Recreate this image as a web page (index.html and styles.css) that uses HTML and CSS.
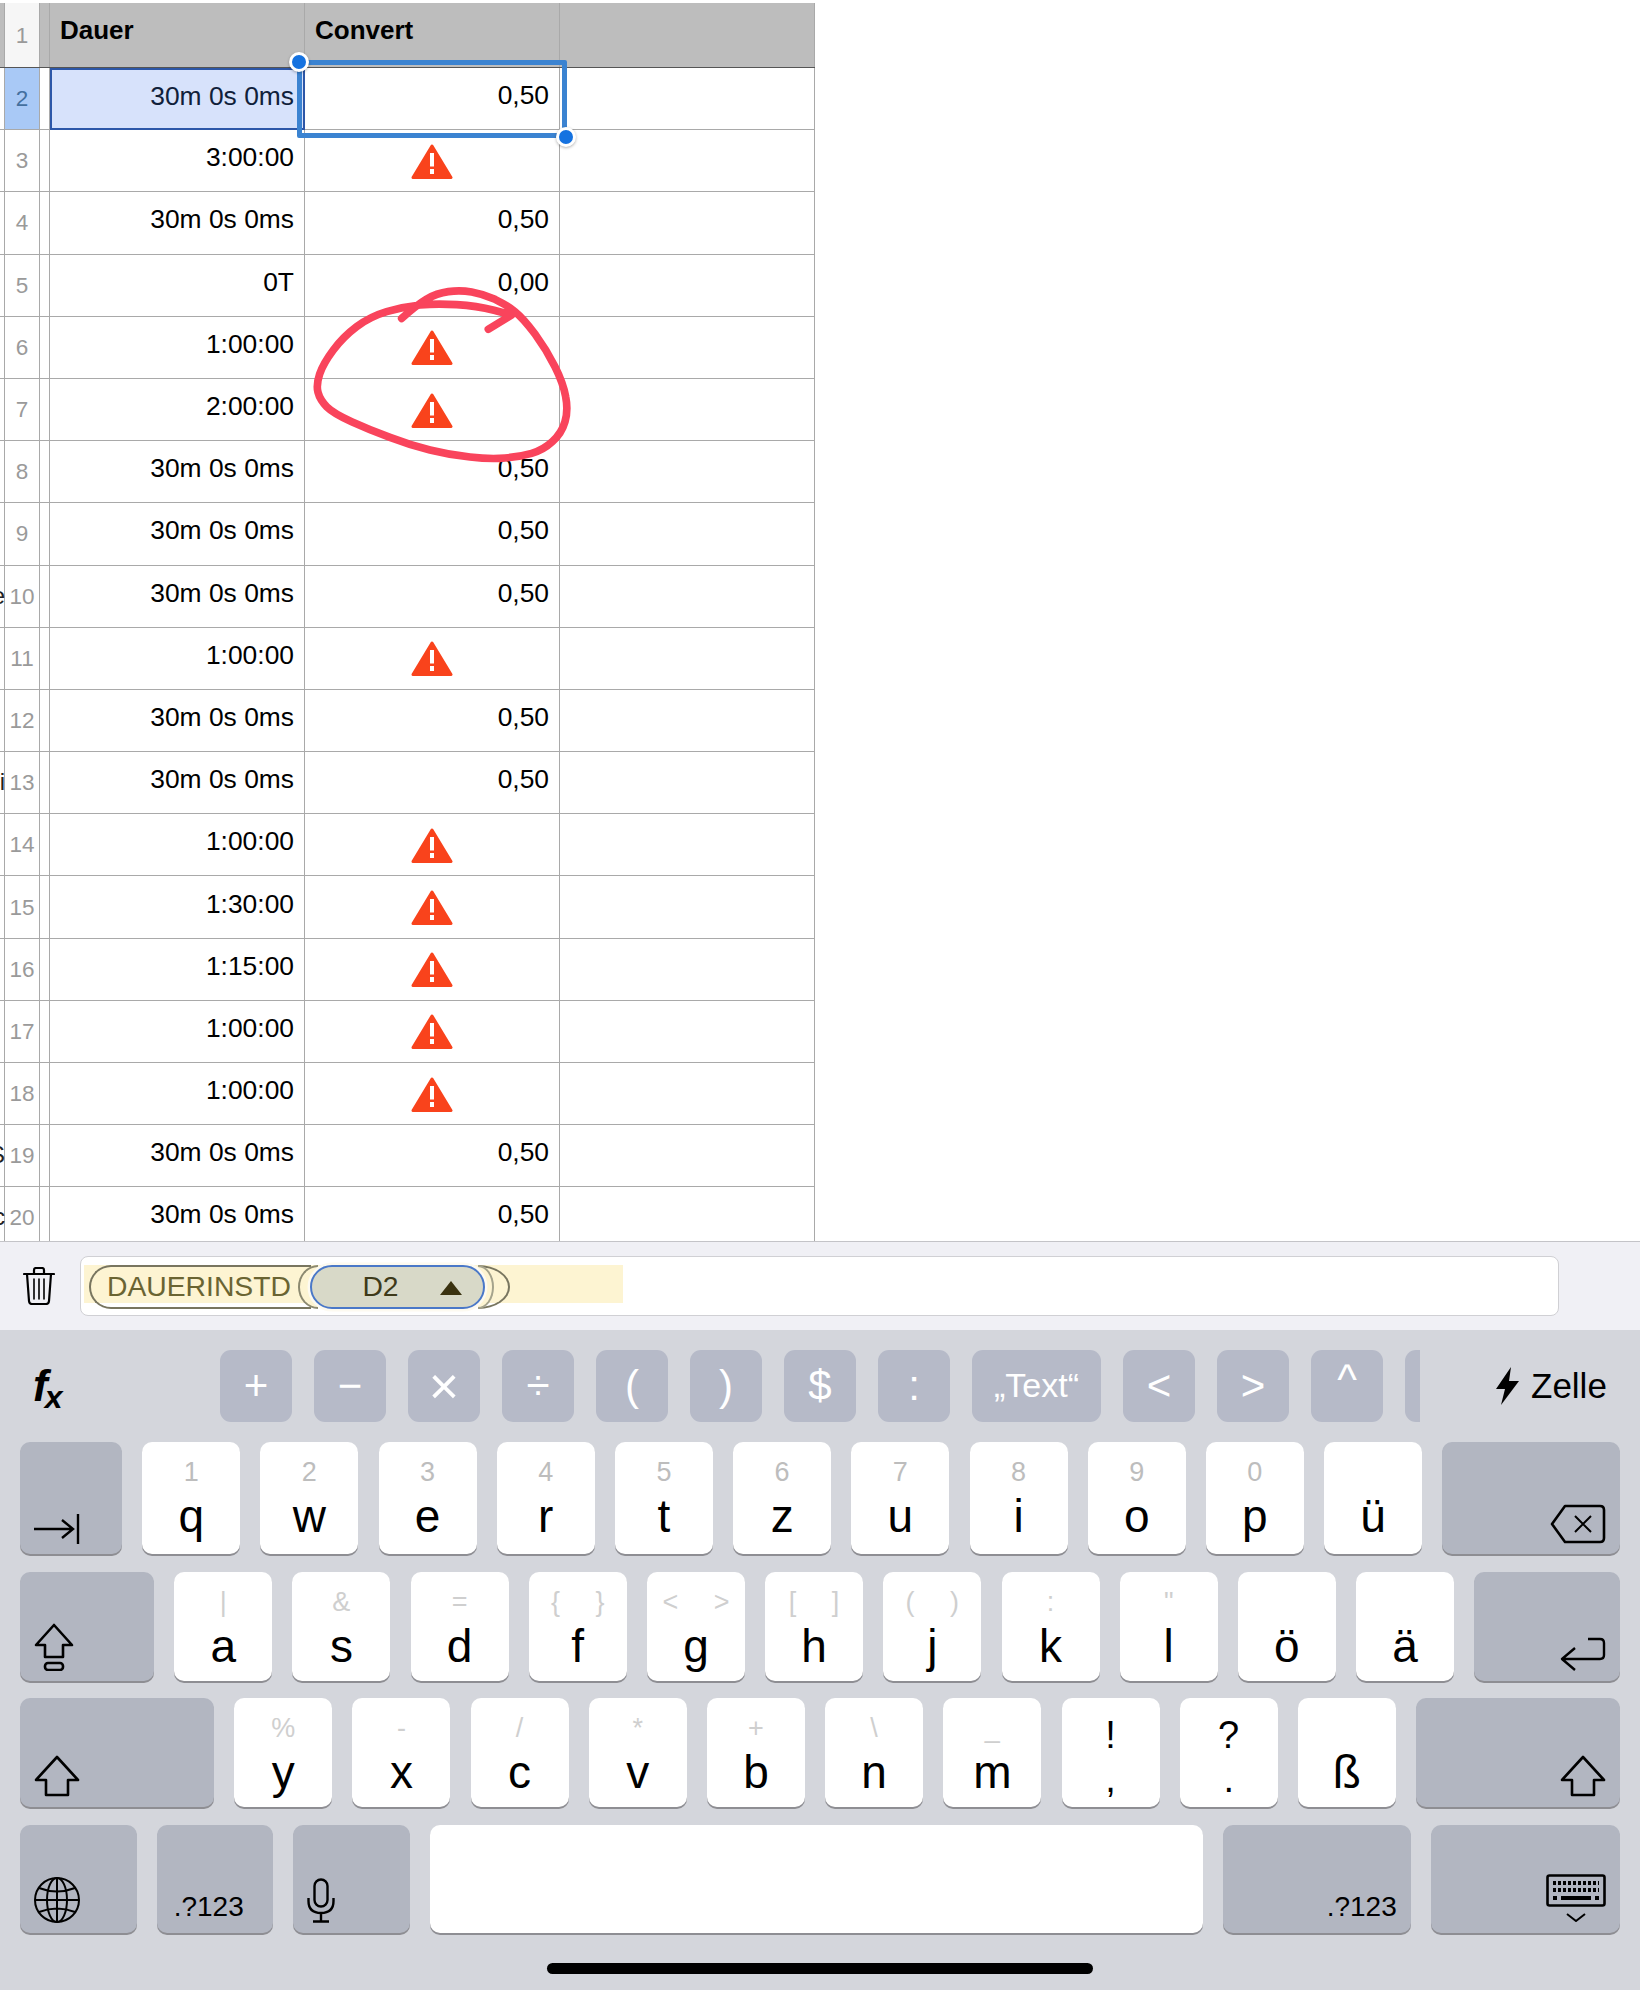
FILE: index.html
```html
<!DOCTYPE html>
<html lang="de">
<head>
    <meta charset="UTF-8" />
    <meta name="viewport" content="width=device-width, initial-scale=1.0" />
    <title>Tabelle</title>
    <link rel="stylesheet" href="styles.css">
</head>
<body>
    <svg class="defs" width="0" height="0" aria-hidden="true">
        <symbol id="warn" viewBox="0 0 42 36">
            <path d="M21 2 L40 33.5 H2 Z" fill="#f9431c" stroke="#f9431c" stroke-width="3" stroke-linejoin="round"/>
            <rect x="19" y="9" width="4" height="13.5" fill="#fff"/>
            <rect x="19" y="25" width="4" height="5" fill="#fff"/>
        </symbol>
    </svg>

    <main class="sheet">
        <div class="row head">
            <div class="idx">1</div><div class="gutter"></div>
            <div class="cell title">Dauer</div><div class="cell title">Convert</div><div class="cell"></div>
        </div>
        <div class="row">
            <div class="idx active">2</div><div class="gutter"></div>
            <div class="cell num picked">30m 0s 0ms</div><div class="cell num">0,50</div><div class="cell"></div>
        </div>
        <div class="row">
            <div class="idx">3</div><div class="gutter"></div>
            <div class="cell num">3:00:00</div><div class="cell warn"><svg><use href="#warn"/></svg></div><div class="cell"></div>
        </div>
        <div class="row">
            <div class="idx">4</div><div class="gutter"></div>
            <div class="cell num">30m 0s 0ms</div><div class="cell num">0,50</div><div class="cell"></div>
        </div>
        <div class="row">
            <div class="idx">5</div><div class="gutter"></div>
            <div class="cell num">0T</div><div class="cell num">0,00</div><div class="cell"></div>
        </div>
        <div class="row">
            <div class="idx">6</div><div class="gutter"></div>
            <div class="cell num">1:00:00</div><div class="cell warn"><svg><use href="#warn"/></svg></div><div class="cell"></div>
        </div>
        <div class="row">
            <div class="idx">7</div><div class="gutter"></div>
            <div class="cell num">2:00:00</div><div class="cell warn"><svg><use href="#warn"/></svg></div><div class="cell"></div>
        </div>
        <div class="row">
            <div class="idx">8</div><div class="gutter"></div>
            <div class="cell num">30m 0s 0ms</div><div class="cell num">0,50</div><div class="cell"></div>
        </div>
        <div class="row">
            <div class="idx">9</div><div class="gutter"></div>
            <div class="cell num">30m 0s 0ms</div><div class="cell num">0,50</div><div class="cell"></div>
        </div>
        <div class="row">
            <div class="idx"><span class="ghost">e</span>10</div><div class="gutter"></div>
            <div class="cell num">30m 0s 0ms</div><div class="cell num">0,50</div><div class="cell"></div>
        </div>
        <div class="row">
            <div class="idx">11</div><div class="gutter"></div>
            <div class="cell num">1:00:00</div><div class="cell warn"><svg><use href="#warn"/></svg></div><div class="cell"></div>
        </div>
        <div class="row">
            <div class="idx">12</div><div class="gutter"></div>
            <div class="cell num">30m 0s 0ms</div><div class="cell num">0,50</div><div class="cell"></div>
        </div>
        <div class="row">
            <div class="idx"><span class="ghost">i</span>13</div><div class="gutter"></div>
            <div class="cell num">30m 0s 0ms</div><div class="cell num">0,50</div><div class="cell"></div>
        </div>
        <div class="row">
            <div class="idx">14</div><div class="gutter"></div>
            <div class="cell num">1:00:00</div><div class="cell warn"><svg><use href="#warn"/></svg></div><div class="cell"></div>
        </div>
        <div class="row">
            <div class="idx">15</div><div class="gutter"></div>
            <div class="cell num">1:30:00</div><div class="cell warn"><svg><use href="#warn"/></svg></div><div class="cell"></div>
        </div>
        <div class="row">
            <div class="idx">16</div><div class="gutter"></div>
            <div class="cell num">1:15:00</div><div class="cell warn"><svg><use href="#warn"/></svg></div><div class="cell"></div>
        </div>
        <div class="row">
            <div class="idx">17</div><div class="gutter"></div>
            <div class="cell num">1:00:00</div><div class="cell warn"><svg><use href="#warn"/></svg></div><div class="cell"></div>
        </div>
        <div class="row">
            <div class="idx">18</div><div class="gutter"></div>
            <div class="cell num">1:00:00</div><div class="cell warn"><svg><use href="#warn"/></svg></div><div class="cell"></div>
        </div>
        <div class="row">
            <div class="idx"><span class="ghost">S</span>19</div><div class="gutter"></div>
            <div class="cell num">30m 0s 0ms</div><div class="cell num">0,50</div><div class="cell"></div>
        </div>
        <div class="row">
            <div class="idx"><span class="ghost">c</span>20</div><div class="gutter"></div>
            <div class="cell num">30m 0s 0ms</div><div class="cell num">0,50</div><div class="cell"></div>
        </div>

        <div class="selection"><i class="handle tl"></i><i class="handle br"></i></div>

        <svg class="scribble" viewBox="0 0 900 630" fill="none" stroke="#f9445c" stroke-width="23" stroke-linecap="round" stroke-linejoin="round">
            <path d="M335 145 Q380 105 410 87 Q440 70 475 65 Q510 60 545 66 Q580 72 615 88 Q650 105 675 125 Q700 145 735 192 Q770 240 795 290 Q820 340 827 380 Q835 420 825 455 Q815 490 787 515 Q760 540 725 550 Q690 560 645 564 Q600 568 540 561 Q480 555 420 540 Q360 525 300 502 Q240 480 185 455 Q130 430 110 410 Q90 390 84 367 Q78 345 89 312 Q100 280 130 240 Q160 200 200 170 Q240 140 290 125 Q340 110 390 105 Q440 100 500 104 Q560 108 612 121 L665 135 L595 178"/>
        </svg>
    </main>

    <section class="formula-bar">
        <svg class="trash" viewBox="0 0 32 38" fill="none" stroke="#000" stroke-width="2.2" stroke-linejoin="round" stroke-linecap="round">
            <path d="M1 7 H31 M11 7 V3 Q11 1 13 1 H19 Q21 1 21 3 V7"/>
            <path d="M4 7 L6 34 Q6.3 37 9 37 H23 Q25.7 37 26 34 L28 7"/>
            <path d="M11 12 V32 M16 12 V32 M21 12 V32" stroke-width="1.6"/>
        </svg>
        <div class="field">
            <div class="formula">
                <span class="fn">DAUERINSTD</span>
                <span class="open"></span>
                <span class="ref">D2<i class="caret"></i></span>
                <span class="close outer"></span>
                <span class="close inner"></span>
            </div>
        </div>
    </section>

    <section class="keyboard">
        <div class="tools">
            <span class="fx">f<sub>x</sub></span>
            <div class="ops">
                <span class="op">+</span>
                <span class="op">−</span>
                <span class="op times">×</span>
                <span class="op">÷</span>
                <span class="op">(</span>
                <span class="op">)</span>
                <span class="op">$</span>
                <span class="op">:</span>
                <span class="op text">„Text“</span>
                <span class="op">&lt;</span>
                <span class="op">&gt;</span>
                <span class="op up">^</span>
                <span class="op"></span>
            </div>
            <span class="mode">
                <svg class="bolt" viewBox="0 0 24 38"><path d="M16 0 L1 22 H10 L6 38 L24 14 H14 Z" fill="#000"/></svg>
                Zelle
            </span>
        </div>

        <div class="keys tall">
            <div class="key fn-key tab">
                <svg width="46" height="30" viewBox="0 0 46 30" fill="none" stroke="#000" stroke-width="2.4"><path d="M0 15 H38 M28 6 L39 15 L28 24"/><path d="M44 0 V30"/></svg>
            </div>
            <div class="key"><span class="hint">1</span><span class="ltr">q</span></div>
            <div class="key"><span class="hint">2</span><span class="ltr">w</span></div>
            <div class="key"><span class="hint">3</span><span class="ltr">e</span></div>
            <div class="key"><span class="hint">4</span><span class="ltr">r</span></div>
            <div class="key"><span class="hint">5</span><span class="ltr">t</span></div>
            <div class="key"><span class="hint">6</span><span class="ltr">z</span></div>
            <div class="key"><span class="hint">7</span><span class="ltr">u</span></div>
            <div class="key"><span class="hint">8</span><span class="ltr">i</span></div>
            <div class="key"><span class="hint">9</span><span class="ltr">o</span></div>
            <div class="key"><span class="hint">0</span><span class="ltr">p</span></div>
            <div class="key"><span class="hint">&nbsp;</span><span class="ltr">ü</span></div>
            <div class="key fn-key grow end">
                <svg width="56" height="40" viewBox="0 0 56 40" fill="none" stroke="#000" stroke-width="2.6" stroke-linejoin="round"><path d="M15 2 H50 Q54 2 54 6 V34 Q54 38 50 38 H15 L2 20 Z"/><path d="M25 12 L41 28 M41 12 L25 28" stroke-width="2"/></svg>
            </div>
        </div>

        <div class="keys">
            <div class="key fn-key caps">
                <svg width="40" height="48" viewBox="0 0 40 48" fill="none" stroke="#000" stroke-width="2.6" stroke-linejoin="round"><path d="M20 2 L38 22 H29 V34 H11 V22 H2 Z"/><rect x="11" y="40" width="18" height="7" rx="3"/></svg>
            </div>
            <div class="key"><span class="hint thin">|</span><span class="ltr">a</span></div>
            <div class="key"><span class="hint thin">&amp;</span><span class="ltr">s</span></div>
            <div class="key"><span class="hint thin">=</span><span class="ltr">d</span></div>
            <div class="key"><span class="hint thin wide">{ }</span><span class="ltr">f</span></div>
            <div class="key"><span class="hint thin wide">&lt; &gt;</span><span class="ltr">g</span></div>
            <div class="key"><span class="hint thin wide">[ ]</span><span class="ltr">h</span></div>
            <div class="key"><span class="hint thin wide">( )</span><span class="ltr">j</span></div>
            <div class="key"><span class="hint thin">:</span><span class="ltr">k</span></div>
            <div class="key"><span class="hint thin">"</span><span class="ltr">l</span></div>
            <div class="key"><span class="hint">&nbsp;</span><span class="ltr">ö</span></div>
            <div class="key"><span class="hint">&nbsp;</span><span class="ltr">ä</span></div>
            <div class="key fn-key grow end">
                <svg width="46" height="34" viewBox="0 0 46 34" fill="none" stroke="#000" stroke-width="2.4" stroke-linejoin="round"><path d="M28 2 H40 Q44 2 44 6 V18 Q44 22 40 22 H3 M15 11 L2 22 L15 33"/></svg>
            </div>
        </div>

        <div class="keys">
            <div class="key fn-key shift">
                <svg width="46" height="42" viewBox="0 0 46 42" fill="none" stroke="#000" stroke-width="2.6" stroke-linejoin="round"><path d="M23 2 L44 25 H34 V40 H12 V25 H2 Z"/></svg>
            </div>
            <div class="key"><span class="hint thin">%</span><span class="ltr">y</span></div>
            <div class="key"><span class="hint thin">-</span><span class="ltr">x</span></div>
            <div class="key"><span class="hint thin">/</span><span class="ltr">c</span></div>
            <div class="key"><span class="hint thin">*</span><span class="ltr">v</span></div>
            <div class="key"><span class="hint thin">+</span><span class="ltr">b</span></div>
            <div class="key"><span class="hint thin">\</span><span class="ltr">n</span></div>
            <div class="key"><span class="hint thin">_</span><span class="ltr">m</span></div>
            <div class="key punct"><span>!</span><span>,</span></div>
            <div class="key punct"><span>?</span><span>.</span></div>
            <div class="key"><span class="hint">&nbsp;</span><span class="ltr">ß</span></div>
            <div class="key fn-key grow end">
                <svg width="46" height="42" viewBox="0 0 46 42" fill="none" stroke="#000" stroke-width="2.6" stroke-linejoin="round"><path d="M23 2 L44 25 H34 V40 H12 V25 H2 Z"/></svg>
            </div>
        </div>

        <div class="keys last">
            <div class="key fn-key w-side">
                <svg width="46" height="46" viewBox="0 0 46 46" fill="none" stroke="#000" stroke-width="2"><ellipse cx="23" cy="23" rx="22" ry="22"/><ellipse cx="23" cy="23" rx="10" ry="22"/><path d="M23 1 V45 M1 23 H45 M5 11 Q23 18 41 11 M5 35 Q23 28 41 35"/></svg>
            </div>
            <div class="key fn-key w-side sym">.?123</div>
            <div class="key fn-key w-side">
                <svg width="28" height="45" viewBox="0 0 28 45" fill="none" stroke="#000" stroke-width="2.4"><rect x="7.5" y="1.5" width="13" height="27" rx="6.5"/><path d="M1.5 20 V23 Q1.5 35 14 35 Q26.5 35 26.5 23 V20 M14 35 V43 M6 43.5 H22"/></svg>
            </div>
            <div class="key space"></div>
            <div class="key fn-key w-wide end sym">.?123</div>
            <div class="key fn-key grow end kb-down">
                <svg width="60" height="48" viewBox="0 0 60 48" fill="none" stroke="#000">
                    <rect x="1.5" y="1.5" width="57" height="30" rx="2" stroke-width="2.6"/>
                    <path d="M7 9 H53 M7 16 H53" stroke-width="4" stroke-dasharray="3 2"/>
                    <path d="M7 24 H11 M15 24 H45 M49 24 H53" stroke-width="4"/>
                    <path d="M21 40 L30 47 L39 40" stroke-width="2"/>
                </svg>
            </div>
        </div>

        <div class="home-bar"></div>
    </section>
</body>
</html>
```

FILE: styles.css
```css
* {
    box-sizing: border-box;
}
body {
    margin: 0;
    width: 1640px;
    height: 1990px;
    display: flex;
    flex-direction: column;
    overflow: hidden;
    background: #fff;
    color: #000;
    font-family: "Liberation Sans", Arial, sans-serif;
}
.defs {
    position: absolute;
}

/* sheet */
.sheet {
    position: relative;
    height: 1241px;
    flex: none;
    padding-top: 3px;
    overflow: hidden;
}
.row {
    display: grid;
    grid-template-columns: 4px 36px 10px 255px 255px 255px;
    height: 62.2px;
    width: 815px;
    border-bottom: 1px solid #a9a9a9;
    font-size: 26.4px;
}
.row::before {
    content: "";
}
.row.head {
    height: 65px;
    background: #bdbdbd;
    border-bottom-color: #555;
}
.idx {
    position: relative;
    display: flex;
    align-items: center;
    justify-content: center;
    padding-top: 1px;
    font-size: 22.5px;
    color: #9a9a9a;
    border-left: 1px solid #a9a9a9;
    border-right: 1px solid #a9a9a9;
}
.head .idx {
    background: #f6f6f6;
}
.idx.active {
    background: #a9c9f6;
    color: #44709f;
}
.ghost {
    position: absolute;
    right: 34px;
    top: 16px;
    font-size: 24px;
    color: #222;
}
.gutter {
    border-right: 1px solid #a9a9a9;
}
.cell {
    display: flex;
    align-items: center;
    padding: 0 10px 6px;
    border-right: 1px solid #a9a9a9;
}
.title {
    padding: 0 10px 10px;
    font-weight: 700;
    font-size: 26px;
}
.num {
    justify-content: flex-end;
}
.picked {
    background: #d7e2fb;
    outline: 2px solid #2d57a8;
    outline-offset: -2px;
    margin-bottom: -1px;
    color: #10203a;
}
.warn {
    justify-content: center;
    padding: 2px 0 0;
}
.warn svg {
    width: 42px;
    height: 36px;
}

/* overlays on the sheet */
.selection {
    position: absolute;
    left: 297px;
    top: 60px;
    width: 270px;
    height: 78px;
    border: 5px solid #3b83d1;
    border-radius: 2px;
}
.handle {
    position: absolute;
    width: 20px;
    height: 20px;
    background: #1572e0;
    border: 3px solid #fff;
    border-radius: 50%;
    box-shadow: 0 1px 3px rgba(0,0,0,0.3);
}
.handle.tl {
    left: -13px;
    top: -13px;
}
.handle.br {
    right: -14px;
    bottom: -14px;
}
.scribble {
    position: absolute;
    left: 290px;
    top: 270px;
    width: 300px;
    height: 210px;
}

/* formula bar */
.formula-bar {
    height: 89px;
    flex: none;
    display: flex;
    align-items: flex-start;
    padding: 14px 0 0 23px;
    background: #f0f0f5;
    border-top: 1px solid #c4c4c8;
}
.trash {
    width: 32px;
    height: 38px;
    margin-top: 11px;
}
.field {
    width: 1479px;
    height: 60px;
    margin-left: 25px;
    padding: 8px 0 0 3px;
    background: #fff;
    border: 1px solid #d0d0d4;
    border-radius: 8px;
}
.formula {
    display: flex;
    width: 539px;
    height: 44px;
    padding-left: 5px;
    background: linear-gradient(#fdf4d2, #fdf4d2) no-repeat 0 0 / 539px 38px;
    color: #6a6432;
    font-size: 28.3px;
}
.fn {
    width: 222px;
    height: 44px;
    padding-left: 16px;
    line-height: 38px;
    background: linear-gradient(#fdf4d2, #fdf4d2) no-repeat 0 0 / 100% 36px;
    border: 2.5px solid #78755f;
    border-right: none;
    border-radius: 22px 0 0 22px;
}
.open {
    width: 20px;
    height: 44px;
    margin-left: -13px;
    background: #fdf4d2;
    border: 2.5px solid #8c8970;
    border-right: none;
    border-radius: 100% 0 0 100% / 50% 0 0 50%;
}
.ref {
    position: relative;
    z-index: 1;
    display: flex;
    align-items: center;
    justify-content: center;
    width: 175px;
    height: 44px;
    margin-left: -8px;
    padding-right: 34px;
    padding-bottom: 2px;
    background: #d8d9c8;
    border: 2px solid #4a78c8;
    border-radius: 22px;
    box-shadow: 0 0 0 2.5px #fdfaf0;
    color: #3e3a1a;
}
.caret {
    position: absolute;
    right: 21px;
    top: 14px;
    border-left: 11px solid transparent;
    border-right: 11px solid transparent;
    border-bottom: 14px solid #3a3210;
}
.close {
    flex: none;
    height: 44px;
    border: 2.5px solid #78755f;
    border-left: none;
    border-radius: 0 100% 100% 0 / 0 50% 50% 0;
}
.close.outer {
    width: 32px;
    margin-left: -7px;
    background: linear-gradient(#fdf4d2, #fdf4d2) no-repeat 0 0 / 100% 36px, #fff;
}
.close.inner {
    width: 16px;
    margin-left: -32px;
    border-color: #a5a38c;
    background: #fdf4d2;
}

/* keyboard */
.keyboard {
    flex: 1;
    display: flex;
    flex-direction: column;
    gap: 17.7px;
    padding: 20px 20px 0;
    background: #d4d6dc;
}
.tools {
    display: flex;
    align-items: center;
    height: 71.7px;
    margin-bottom: 2.6px;
}
.fx {
    width: 200px;
    padding: 0 0 0 13px;
    font-size: 44px;
    font-weight: 700;
    font-style: italic;
    line-height: 46px;
}
.fx sub {
    font-size: 32px;
    line-height: 0;
    vertical-align: -7px;
    margin-left: -3px;
}
.ops {
    display: flex;
    gap: 22px;
    width: 1200px;
    overflow: hidden;
}
.op {
    flex: none;
    display: flex;
    align-items: center;
    justify-content: center;
    width: 72px;
    height: 71.7px;
    background: #b6bac8;
    border-radius: 11px;
    color: #fff;
    font-size: 42px;
}
.op.times {
    font-size: 52px;
}
.op.text {
    width: 129px;
    font-size: 34px;
}
.op.up {
    align-items: flex-start;
    padding-top: 6px;
}
.mode {
    display: flex;
    align-items: center;
    gap: 12px;
    margin-left: 75px;
    font-size: 35px;
}
.bolt {
    width: 24px;
    height: 38px;
}
.keys {
    display: flex;
    gap: 20.2px;
    height: 109px;
}
.keys.tall {
    height: 112px;
}
.keys.last {
    height: 108px;
}
.key {
    flex: none;
    display: flex;
    flex-direction: column;
    align-items: center;
    width: 98px;
    padding-top: 14px;
    background: #fff;
    border-radius: 10px;
    box-shadow: 0 2px 0 #8e8e93;
}
.hint {
    height: 32px;
    font-size: 27px;
    line-height: 32px;
    color: #bdbdbd;
}
.hint.thin {
    color: #cfcfcf;
}
.hint.wide {
    word-spacing: 28px;
}
.ltr {
    margin-top: 3px;
    font-size: 46px;
    line-height: 50px;
}
.punct {
    padding-top: 15px;
    font-size: 38px;
    line-height: 44px;
}
.fn-key {
    flex-direction: row;
    align-items: flex-end;
    justify-content: flex-start;
    padding: 0 14px 10px;
    background: #b2b6c1;
}
.fn-key.end {
    justify-content: flex-end;
}
.grow {
    flex: 1;
}
.tab {
    width: 102px;
}
.caps {
    width: 134px;
}
.shift {
    width: 194px;
}
.w-side {
    width: 116.5px;
}
.w-wide {
    width: 187.5px;
}
.kb-down {
    padding-bottom: 11px;
}
.sym {
    padding-left: 17px;
    padding-bottom: 12px;
    font-size: 28px;
    line-height: 28px;
}
.space {
    width: 773px;
}
.home-bar {
    align-self: center;
    width: 546px;
    height: 11px;
    margin-top: 12.3px;
    background: #000;
    border-radius: 6px;
}
```
